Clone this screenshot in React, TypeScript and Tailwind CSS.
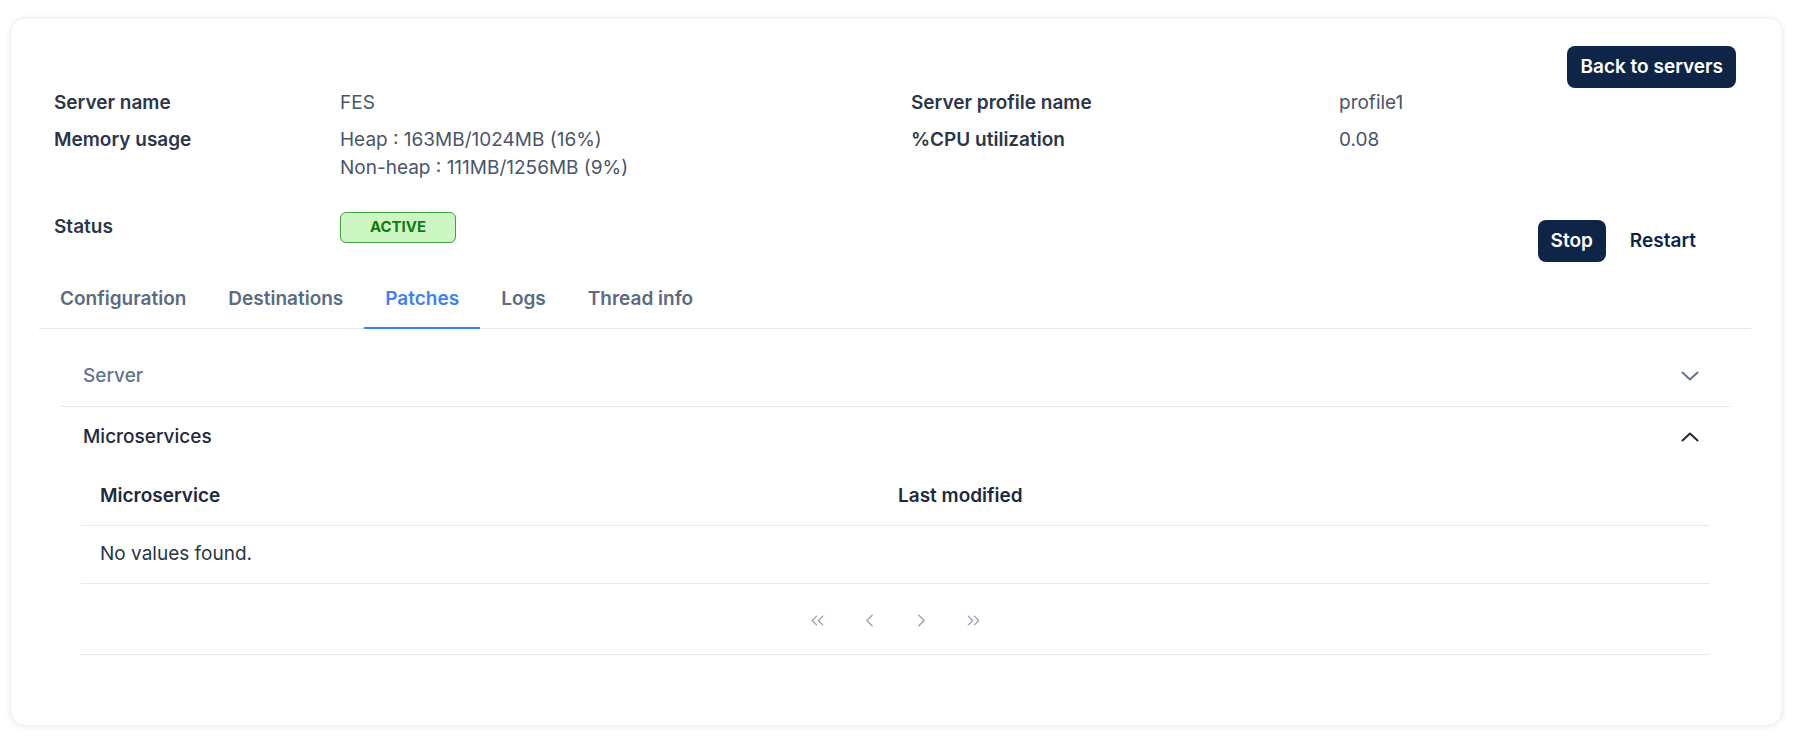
import { useState } from "react";
import { ChevronsLeft, ChevronLeft, ChevronRight, ChevronsRight } from "lucide-react";

const TABS = ["Configuration", "Destinations", "Patches", "Logs", "Thread info"];

function Chevron({ up, className }: { up?: boolean; className?: string }) {
  return (
    <svg width="18" height="10" viewBox="0 0 18 10" fill="none" className={className}>
      <path
        d={up ? "M1.5 8.5L9 1.5l7.5 7" : "M1.5 1.5L9 8.5l7.5-7"}
        stroke="currentColor"
        strokeWidth="2"
        strokeLinecap="round"
        strokeLinejoin="round"
      />
    </svg>
  );
}

function AccordionRow({
  title,
  open,
  onToggle,
  children,
}: {
  title: string;
  open: boolean;
  onToggle: () => void;
  children?: React.ReactNode;
}) {
  return (
    <div className={open ? "" : "border-b border-[#e6eaf0]"}>
      <button
        onClick={onToggle}
        className="flex h-[60px] w-full items-center justify-between pl-[23px] pr-[32px] text-left"
      >
        <span className={open ? "text-[19px] font-medium text-[#1f2a3c]" : "text-[19px] font-medium text-[#64748b]"}>
          {title}
        </span>
        <Chevron up={open} className={open ? "text-[#1f2a3c]" : "text-[#64748b]"} />
      </button>
      {open && children}
    </div>
  );
}

export default function App() {
  const [tab, setTab] = useState("Patches");
  const [serverOpen, setServerOpen] = useState(false);
  const [msOpen, setMsOpen] = useState(true);

  return (
    <div className="min-h-[740px] bg-white pl-[10px] pt-[17px]" style={{ fontFamily: "Inter, 'Noto Sans', sans-serif" }}>
      <div className="h-[709px] w-[1773px] rounded-2xl border border-[#eef0f3] bg-white pl-[28px] pr-[31px] pt-[28px] shadow-[0_1px_6px_rgba(15,23,42,0.08)]">
        {/* header */}
        <div className="px-[15px]">
          <div className="flex justify-end">
            <button className="h-[42px] rounded-lg bg-[#0f2547] px-[13px] text-[19px] font-semibold text-white">
              Back to servers
            </button>
          </div>

          <div className="mt-px grid grid-cols-[286px_571px_428px_1fr] gap-y-[9px] text-[19px] leading-[28px]">
            <div className="font-semibold text-[#2b3649]">Server name</div>
            <div className="text-[#4a5568]">FES</div>
            <div className="font-semibold text-[#2b3649]">Server profile name</div>
            <div className="text-[#4a5568]">profile1</div>

            <div className="font-semibold text-[#2b3649]">Memory usage</div>
            <div className="text-[#4a5568]">
              <div>Heap : 163MB/1024MB (16%)</div>
              <div>Non-heap : 111MB/1256MB (9%)</div>
            </div>
            <div className="font-semibold text-[#2b3649]">%CPU utilization</div>
            <div className="text-[#4a5568]">0.08</div>
          </div>

          <div className="mt-[30px] flex items-start">
            <div className="flex h-[31px] w-[286px] items-center text-[19px] font-semibold text-[#2b3649]">Status</div>
            <span className="flex h-[31px] w-[116px] items-center justify-center rounded-md border border-[#3fa33f] bg-[#ccf7c3] text-[15px] font-bold text-[#137a13]">
              ACTIVE
            </span>
            <div className="ml-auto mr-[27px] mt-[8px] flex gap-[11px]">
              <button className="h-[42px] rounded-lg bg-[#0f2547] px-[13px] text-[19px] font-semibold text-white">Stop</button>
              <button className="h-[42px] rounded-lg px-[13px] text-[19px] font-semibold text-[#0f2547]">Restart</button>
            </div>
          </div>
        </div>

        {/* tabs */}
        <div className="mt-[9px] flex border-b border-[#e3e8f0]">
          {TABS.map((t) => (
            <button
              key={t}
              onClick={() => setTab(t)}
              className={
                t === tab
                  ? "-mb-px h-[58px] border-b-2 border-[#3b82f6] px-[21px] text-[19px] font-semibold text-[#3b82f6]"
                  : "-mb-px h-[58px] border-b-2 border-transparent px-[21px] text-[19px] font-semibold text-[#5b6b82]"
              }
            >
              {t}
            </button>
          ))}
        </div>

        {/* patches */}
        <div className="ml-[21px] mr-[20px] mt-[17px]">
          <AccordionRow title="Server" open={serverOpen} onToggle={() => setServerOpen(!serverOpen)} />
          <AccordionRow title="Microservices" open={msOpen} onToggle={() => setMsOpen(!msOpen)}>
            <div className="px-[21px]">
              <div className="grid h-[59px] grid-cols-[817px_1fr] items-center border-b border-[#e6e9ee] text-[19px] font-semibold text-[#1f2a3c]">
                <div className="pl-[19px]">Microservice</div>
                <div>Last modified</div>
              </div>
              <div className="flex h-[58px] items-center border-b border-[#e6eaf0] pl-[19px] text-[19px] text-[#2b3544]">
                No values found.
              </div>
              <div className="flex h-[71px] items-center justify-center border-b border-[#e6eaf0] pt-[3px] text-[#94a3b8]">
                {[ChevronsLeft, ChevronLeft, ChevronRight, ChevronsRight].map((Icon, i) => (
                  <button key={i} className="flex w-[52px] items-center justify-center">
                    <Icon size={21} strokeWidth={1.6} />
                  </button>
                ))}
              </div>
            </div>
          </AccordionRow>
        </div>
      </div>
    </div>
  );
}
